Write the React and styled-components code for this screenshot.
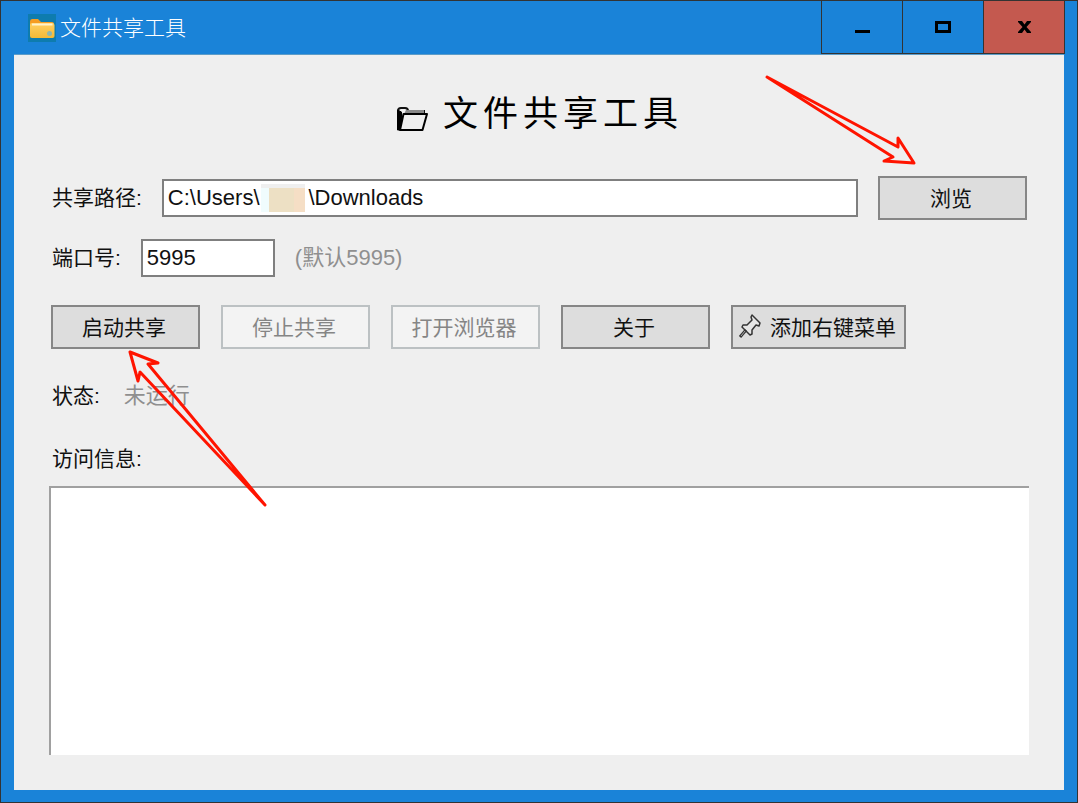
import React, { useState } from "react";
import styled, { createGlobalStyle } from "styled-components";

const GlobalStyle = createGlobalStyle`
  *, *::before, *::after { box-sizing: border-box; }
  body {
    margin: 0;
    font-family: "Liberation Sans", "Noto Sans CJK SC", sans-serif;
    font-size: 21px;
    color: #111;
  }
  button, input, textarea { font: inherit; color: inherit; margin: 0; border-radius: 0; }
`;

const Window = styled.div`
  display: flex;
  flex-direction: column;
  min-height: 100vh;
  padding: 0 13px 12px;
  background: #1a83d8;
  border: 1px solid #333;
`;

const TitleBar = styled.header`
  display: flex;
  align-items: center;
  height: 54px;
  border-bottom: 1px solid #5c9cc8;
`;

const AppIcon = styled.svg`
  width: 28px;
  height: 28px;
  margin: 0 4px 0 14px;
`;

const TitleText = styled.span`
  flex: 1;
  color: #fff;
  font-weight: 300;
  line-height: 28px;
`;

const WindowControls = styled.div`
  display: flex;
  align-self: stretch;
  margin-right: -1px;
  border-left: 1px solid #333;
`;

const ControlButton = styled.button`
  display: grid;
  place-items: center;
  width: 81px;
  padding: 0;
  border: 0;
  border-right: 1px solid #333;
  border-bottom: 1px solid #333;
  background: ${(p) => (p.$danger ? "#c4594f" : "transparent")};
`;

const Client = styled.main`
  flex: 1;
  display: flex;
  flex-direction: column;
  padding: 33px 35px 35px;
  background: #efefef;
`;

const Heading = styled.h1`
  display: flex;
  justify-content: center;
  align-items: center;
  gap: 14px;
  margin: 0 0 36px;
  font-size: 35px;
  font-weight: 400;
  line-height: 52px;
  letter-spacing: 5px;
  color: #000;
`;

const HeadingIcon = styled.svg`
  width: 34px;
  height: 26px;
  margin-top: 10px;
`;

const Row = styled.div`
  display: flex;
  align-items: center;
  gap: ${(p) => p.$gap || 20}px;
  min-height: ${(p) => p.$height || 44}px;
  margin-bottom: ${(p) => p.$after || 0}px;
  padding: 0 2px;
`;

const Label = styled.label`
  padding-left: 1px;
  line-height: 30px;
`;

const Muted = styled.span`
  color: #8f8f8f;
  font-size: 22px;
  line-height: 30px;
`;

const TextInput = styled.input`
  width: ${(p) => (p.$wide ? "100%" : "134px")};
  height: 38px;
  padding: 0 4px;
  border: 2px solid #7f7f7f;
  background: #fff;
  font-size: 22px;
  outline: none;
`;

const PathField = styled.div`
  position: relative;
  flex: 1;
  display: flex;
`;

const NameMask = styled.span`
  position: absolute;
  left: 99px;
  top: 5px;
  width: 44px;
  height: 28px;
  border-top: 4px solid #efefef;
  background: linear-gradient(90deg, #f0fcfd 8px, #ede0c4 8px 33px, #f5dec5 33px);
`;

const Anchor = styled.div`
  position: relative;
  display: flex;
`;

const PushButton = styled.button`
  display: flex;
  align-items: center;
  justify-content: center;
  gap: 8px;
  min-width: ${(p) => (p.$fit ? 175 : 149)}px;
  height: 44px;
  padding: 0 7px 2px 4px;
  border: 2px solid #868686;
  background: #ddd;
  white-space: nowrap;

  &:disabled {
    border-color: #bcc1c3;
    background: #f3f3f3;
    color: #858585;
  }
`;

const BrowseArrow = styled.svg`
  position: absolute;
  right: 107px;
  bottom: 52px;
  width: 158px;
  height: 96px;
  pointer-events: none;
`;

const StartArrow = styled.svg`
  position: absolute;
  left: 74px;
  top: 42px;
  width: 146px;
  height: 164px;
  z-index: 1;
  pointer-events: none;
`;

const InfoBox = styled.textarea`
  flex: 1;
  width: 100%;
  min-height: 120px;
  padding: 6px;
  border: 0;
  border-top: 2px solid #a0a0a0;
  border-left: 2px solid #a0a0a0;
  background: #fff;
  resize: none;
  outline: none;
`;

const arrowStroke = {
  fill: "none",
  stroke: "#ff1400",
  strokeWidth: 3,
  strokeLinejoin: "round",
};

export default function App() {
  const [path, setPath] = useState("C:\\Users\\        \\Downloads");
  const [port, setPort] = useState("5995");

  return (
    <>
      <GlobalStyle />
      <Window>
        <TitleBar>
          <AppIcon viewBox="0 0 28 28" aria-hidden="true">
            <defs>
              <linearGradient id="folder" x1="0" y1="0" x2="0" y2="1">
                <stop offset="0" stopColor="#ffd062" />
                <stop offset="1" stopColor="#f4b936" />
              </linearGradient>
            </defs>
            <rect width="28" height="28" fill="#0e7cae" />
            <path d="M2 7.5Q2 5 4 5h6l3 3h11q2 0 2 2v12H2z" fill="#f59c22" />
            <path d="M2 11q0-2 2-2h20q2.500 0 2.500 2v11q0 2-2 2H4q-2 0-2-2z" fill="url(#folder)" />
            <path d="M4 9.500h20.500v2H4z" fill="#fff2cc" />
            <circle cx="21.500" cy="19.500" r="2.500" fill="#8fb7ae" />
          </AppIcon>
          <TitleText>文件共享工具</TitleText>
          <WindowControls>
            <ControlButton aria-label="最小化">
              <svg width="16" height="16"><path d="M1 11h15v3H1z" /></svg>
            </ControlButton>
            <ControlButton aria-label="最大化">
              <svg width="16" height="12"><path d="M1.500 1.500h13v9h-13z" fill="none" stroke="#000" strokeWidth="3" /></svg>
            </ControlButton>
            <ControlButton $danger aria-label="关闭">
              <svg width="13" height="12"><path d="M0 0h4l2.500 3.500L9 0h4v1L8.500 6l4.500 5v1H9L6.500 8.500 4 12H0v-1l4.500-5L0 1z" /></svg>
            </ControlButton>
          </WindowControls>
        </TitleBar>

        <Client>
          <Heading>
            <HeadingIcon viewBox="0 0 34 26" aria-hidden="true">
              <path d="M3 24V5q0-3 3-3h4q3 0 3 3h16v3" fill="none" stroke="#111" strokeWidth="2" />
              <path d="M2.500 4v20h4V6z" fill="#000" stroke="#000" />
              <path d="M11 4h18v4H9z" fill="#888" />
              <path d="M8.500 8H32l-4.500 16H5z" fill="#efefef" stroke="#000" strokeWidth="2" strokeLinejoin="round" />
            </HeadingIcon>
            文件共享工具
          </Heading>

          <Row $after={19}>
            <Label htmlFor="path">共享路径:</Label>
            <PathField>
              <TextInput id="path" $wide value={path} onChange={(e) => setPath(e.target.value)} />
              <NameMask />
            </PathField>
            <Anchor>
              <PushButton>浏览</PushButton>
              <BrowseArrow viewBox="762 72 158 96" aria-hidden="true">
                <path {...arrowStroke} d="M767 77L898 147V138L914 163L884 161L893 157Z" />
              </BrowseArrow>
            </Anchor>
          </Row>

          <Row $height={38} $after={28}>
            <Label htmlFor="port">端口号:</Label>
            <TextInput id="port" value={port} onChange={(e) => setPort(e.target.value)} />
            <Muted>(默认5995)</Muted>
          </Row>

          <Row $gap={21} $after={32}>
            <Anchor>
              <PushButton>启动共享</PushButton>
              <StartArrow viewBox="125 347 146 164" aria-hidden="true">
                <path {...arrowStroke} d="M130 352L158 363L148 364L265 505L140 372L138 381Z" />
              </StartArrow>
            </Anchor>
            <PushButton disabled>停止共享</PushButton>
            <PushButton disabled>打开浏览器</PushButton>
            <PushButton>关于</PushButton>
            <PushButton $fit>
              <svg width="24" height="26" viewBox="0 0 24 26" aria-hidden="true">
                <path
                  d="M14 2l8 8-1 3-3-1-4 5v4l-2 1-8-8 1-2h4l5-5-1-3z"
                  fill="#e6e6e6" stroke="#333" strokeWidth="1.500" strokeLinejoin="round"
                />
                <path d="M8 17l-6 7" stroke="#333" strokeWidth="3" />
                <path d="M7 18l-4 5" stroke="#aaa" />
              </svg>
              添加右键菜单
            </PushButton>
          </Row>

          <Row $height={30} $gap={24} $after={33}>
            <Label as="span">状态:</Label>
            <Muted>未运行</Muted>
          </Row>

          <Row $height={30} $after={12}>
            <Label htmlFor="info">访问信息:</Label>
          </Row>
          <InfoBox id="info" readOnly />
        </Client>
      </Window>
    </>
  );
}
